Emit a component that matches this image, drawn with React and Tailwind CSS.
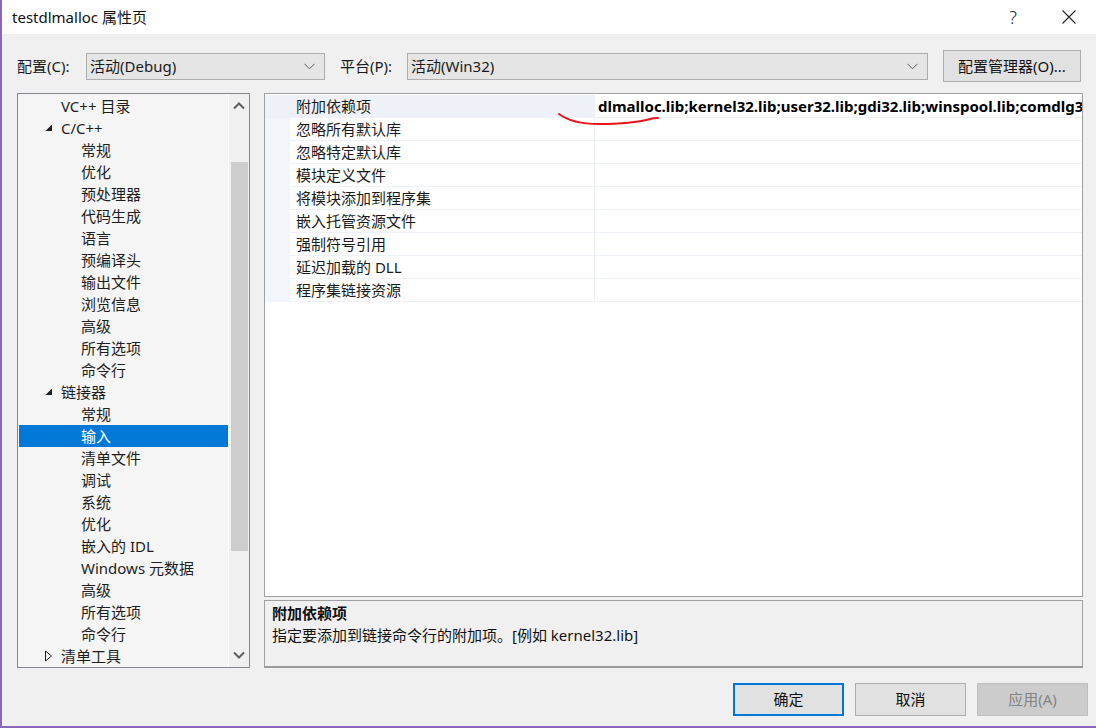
import React from 'react';

const FONT = { fontFamily: '"Noto Sans", "Noto Sans CJK SC", sans-serif' };

const tree = [
  { t: 'VC++ 目录', l: 1 },
  { t: 'C/C++', l: 1, e: 'open' },
  { t: '常规', l: 2 },
  { t: '优化', l: 2 },
  { t: '预处理器', l: 2 },
  { t: '代码生成', l: 2 },
  { t: '语言', l: 2 },
  { t: '预编译头', l: 2 },
  { t: '输出文件', l: 2 },
  { t: '浏览信息', l: 2 },
  { t: '高级', l: 2 },
  { t: '所有选项', l: 2 },
  { t: '命令行', l: 2 },
  { t: '链接器', l: 1, e: 'open' },
  { t: '常规', l: 2 },
  { t: '输入', l: 2, sel: true },
  { t: '清单文件', l: 2 },
  { t: '调试', l: 2 },
  { t: '系统', l: 2 },
  { t: '优化', l: 2 },
  { t: '嵌入的 IDL', l: 2 },
  { t: 'Windows 元数据', l: 2 },
  { t: '高级', l: 2 },
  { t: '所有选项', l: 2 },
  { t: '命令行', l: 2 },
  { t: '清单工具', l: 1, e: 'closed' },
];

const props = [
  '附加依赖项',
  '忽略所有默认库',
  '忽略特定默认库',
  '模块定义文件',
  '将模块添加到程序集',
  '嵌入托管资源文件',
  '强制符号引用',
  '延迟加载的 DLL',
  '程序集链接资源',
];

function Chevron({ className = '' }) {
  return (
    <svg width="11" height="7" viewBox="0 0 11 7" className={className}>
      <path d="M0.5 0.8 L5.5 5.8 L10.5 0.8" fill="none" stroke="#5a5a5a" strokeWidth="1" />
    </svg>
  );
}

function Select({ value, className }) {
  return (
    <div className={`h-[27px] bg-[#e5e5e5] border border-[#adadad] flex items-center justify-between pl-[3px] pr-[9px] ${className}`}>
      <span className="text-[15px] text-[#1a1a1a] leading-none">{value}</span>
      <Chevron />
    </div>
  );
}

function Tri({ open }) {
  if (open) {
    return (
      <svg width="8" height="8" viewBox="0 0 8 8">
        <path d="M7 0.5 L7 7 L0.5 7 Z" fill="#1e1e1e" />
      </svg>
    );
  }
  return (
    <svg width="9" height="12" viewBox="0 0 9 12">
      <path d="M1.5 1 L7.5 6 L1.5 11 Z" fill="none" stroke="#1e1e1e" strokeWidth="1" />
    </svg>
  );
}

function Button({ children, kind }) {
  let cls = 'bg-[#e1e1e1] border border-[#adadad] text-[#111]';
  if (kind === 'default') cls = 'bg-[#e1e1e1] border-2 border-[#0078d7] text-[#111]';
  if (kind === 'disabled') cls = 'bg-[#cccccc] border border-[#bfbfbf] text-[#838383]';
  return (
    <div className={`w-[111px] h-[33px] flex items-center justify-center text-[15px] ${cls}`}>{children}</div>
  );
}

export default function App() {
  return (
    <div style={FONT} className="w-[1096px] h-[728px] flex flex-col border-l-2 border-b-2 border-[#8a67bd] overflow-hidden relative">
      {/* Title bar */}
      <div className="h-[34px] bg-white flex items-center pl-[10px] shrink-0">
        <span className="text-[15px] text-[#111]">testdlmalloc 属性页</span>
        <div className="ml-auto flex items-center h-full">
          <span className="text-[18px] text-[#222] w-[46px] text-center mr-[10px] font-light">?</span>
          <div className="w-[46px] flex justify-center mr-[4px]">
            <svg width="14" height="14" viewBox="0 0 14 14">
              <path d="M0.5 0.5 L13.5 13.5 M13.5 0.5 L0.5 13.5" stroke="#222" strokeWidth="1.1" />
            </svg>
          </div>
        </div>
      </div>

      {/* Body */}
      <div className="flex-1 bg-[#f0f0f0] flex flex-col pl-[15px]">
        {/* Top row */}
        <div className="flex items-center h-[32px] mt-[16px]">
          <span className="text-[15px] text-[#1a1a1a] w-[69px]">配置(C):</span>
          <Select value="活动(Debug)" className="w-[239px]" />
          <span className="text-[15px] text-[#1a1a1a] ml-[15px] w-[67px]">平台(P):</span>
          <Select value="活动(Win32)" className="w-[521px]" />
          <div className="ml-[15px] w-[138px] h-[32px] bg-[#e1e1e1] border border-[#adadad] flex items-center justify-center text-[15px] text-[#111]">
            配置管理器(O)...
          </div>
        </div>

        {/* Main */}
        <div className="flex mt-[11px]">
          {/* Tree */}
          <div className="w-[233px] h-[575px] border border-[#828790] bg-[#f5f5f5] flex">
            <div className="w-[210px] pt-[1px] flex flex-col">
              {tree.map((it, i) => (
                <div
                  key={i}
                  className={`h-[22px] flex items-center text-[15px] ml-[1px] ${it.sel ? 'bg-[#0078d7] text-white' : 'text-[#1e1e1e]'}`}
                >
                  {it.l === 1 ? (
                    <>
                      <div className="w-[35px] flex justify-end pr-[1px]">
                        {it.e === 'open' && <Tri open />}
                        {it.e === 'closed' && <Tri open={false} />}
                      </div>
                      <span className="ml-[7px] leading-none">{it.t}</span>
                    </>
                  ) : (
                    <span className="ml-[62px] leading-none">{it.t}</span>
                  )}
                </div>
              ))}
            </div>
            <div className="w-[1px] bg-white" />
            <div className="w-[20px] bg-[#f0f0f0] flex flex-col items-center">
              <div className="h-[22px] flex items-center justify-center pt-[2px]">
                <svg width="12" height="8" viewBox="0 0 12 8">
                  <path d="M1 6.5 L6 1.5 L11 6.5" fill="none" stroke="#5e5e5e" strokeWidth="2" />
                </svg>
              </div>
              <div className="h-[46px]" />
              <div className="w-[17px] h-[389px] bg-[#cdcdcd]" />
              <div className="flex-1" />
              <div className="h-[22px] flex items-center justify-center pb-[2px]">
                <svg width="12" height="8" viewBox="0 0 12 8">
                  <path d="M1 1.5 L6 6.5 L11 1.5" fill="none" stroke="#5e5e5e" strokeWidth="2" />
                </svg>
              </div>
            </div>
          </div>

          {/* Right side */}
          <div className="ml-[14px] w-[819px] flex flex-col">
            <div className="h-[504px] bg-white border border-[#a0a0a0] pt-[1px] overflow-hidden">
              {props.map((p, i) => (
                <div key={i} className="h-[23px] flex">
                  <div className={`w-[25px] ${i === 0 ? 'bg-[#eef2f8]' : 'bg-[#f2f5fa]'}`} />
                  <div
                    className={`w-[304px] flex items-center pl-[6px] text-[15px] text-[#1a1a1a] border-b border-[#eef1f7] ${i === 0 ? 'bg-[#eef2f8]' : 'bg-white'}`}
                  >
                    <span className="leading-none">{p}</span>
                  </div>
                  <div className="w-[1px] bg-[#eef1f7]" />
                  <div className="flex-1 flex items-center pl-[3px] border-b border-[#eef1f7] whitespace-nowrap overflow-hidden">
                    {i === 0 && (
                      <span className="text-[15px] font-bold text-black leading-none">
                        dlmalloc.lib;kernel32.lib;user32.lib;gdi32.lib;winspool.lib;comdlg32.lib
                      </span>
                    )}
                  </div>
                </div>
              ))}
            </div>
            <div className="mt-[3px] h-[68px] bg-[#f0f0f0] border border-[#a0a0a0] border-b-2 border-b-[#9a9a9a] px-[7px] pt-[1px]">
              <div className="text-[15px] font-bold text-[#111] h-[22px] flex items-center">附加依赖项</div>
              <div className="text-[15px] text-[#111] h-[22px] flex items-center">指定要添加到链接命令行的附加项。[例如 kernel32.lib]</div>
            </div>
          </div>
        </div>

        {/* Buttons */}
        <div className="flex mt-[15px] ml-[716px] gap-[11px]">
          <Button kind="default">确定</Button>
          <Button>取消</Button>
          <Button kind="disabled">应用(A)</Button>
        </div>
      </div>

      {/* Red annotation stroke */}
      <svg className="absolute left-[555px] top-[110px] pointer-events-none" width="104" height="20" viewBox="0 0 104 20">
        <path d="M2 4 C 10 10, 22 14, 42 14 C 62 14, 82 12, 93 9 C 96 8, 98 8, 101 8" fill="none" stroke="#e8141c" strokeWidth="2" strokeLinecap="round" />
      </svg>
    </div>
  );
}
